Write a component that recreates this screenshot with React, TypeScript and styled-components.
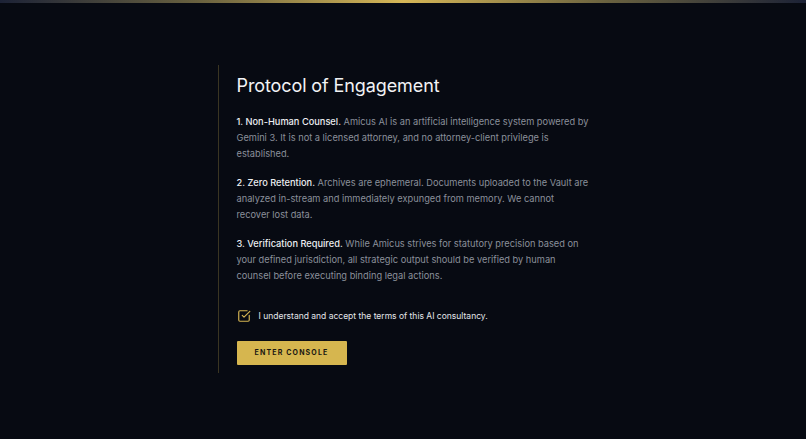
import React, { useState } from "react";
import styled, { createGlobalStyle } from "styled-components";
import { SquareCheckBig, Square } from "lucide-react";

const GlobalStyle = createGlobalStyle`
  html, body {
    margin: 0;
    padding: 0;
    background: #070a12;
    font-family: Inter, "Noto Sans", sans-serif;
    -webkit-font-smoothing: antialiased;
  }
`;

const Page = styled.div`
  min-height: 100vh;
  display: flex;
  flex-direction: column;
  background: #070a12;
`;

const TopBar = styled.div`
  height: 3px;
  background: linear-gradient(90deg, #1c2236 0%, #6b6340 25%, #d6b757 50%, #6b6340 75%, #1c2236 100%);
`;

const Main = styled.main`
  flex: 1;
  display: flex;
  align-items: center;
  justify-content: center;
  padding-bottom: 5px;
`;

const Panel = styled.section`
  width: 352px;
  border-left: 1px solid #3a3522;
  padding: 7px 0 8px 18px;
`;

const Title = styled.h1`
  margin: 0 0 14px;
  font-size: 18px;
  line-height: 28px;
  font-weight: 400;
  color: #f2f3f5;
  letter-spacing: -0.1px;
`;

const Clause = styled.p`
  margin: 0 0 13px;
  font-size: 9.25px;
  line-height: 16px;
  color: #8b909b;
  &:last-of-type {
    margin-bottom: 0;
  }
`;

const Lead = styled.strong`
  font-weight: 500;
  color: #eceef1;
`;

const AcceptRow = styled.label`
  margin-top: 24px;
  display: flex;
  align-items: center;
  gap: 8px;
  font-size: 8.5px;
  line-height: 16px;
  color: #e4e6ea;
  cursor: pointer;
  svg {
    color: #d4b452;
    flex-shrink: 0;
  }
`;

const EnterButton = styled.button<{ $enabled: boolean }>`
  margin-top: 17px;
  width: 110px;
  height: 24px;
  border: none;
  border-radius: 1px;
  background: #d6b64f;
  opacity: ${(p) => (p.$enabled ? 1 : 0.5)};
  color: #1a1712;
  font-family: Inter, "Noto Sans", sans-serif;
  font-size: 7px;
  font-weight: 700;
  letter-spacing: 1.15px;
  cursor: pointer;
`;

const clauses = [
  {
    lead: "1. Non-Human Counsel.",
    body: "Amicus AI is an artificial intelligence system powered by Gemini 3. It is not a licensed attorney, and no attorney-client privilege is established.",
  },
  {
    lead: "2. Zero Retention.",
    body: "Archives are ephemeral. Documents uploaded to the Vault are analyzed in-stream and immediately expunged from memory. We cannot recover lost data.",
  },
  {
    lead: "3. Verification Required.",
    body: "While Amicus strives for statutory precision based on your defined jurisdiction, all strategic output should be verified by human counsel before executing binding legal actions.",
  },
];

export default function App() {
  const [accepted, setAccepted] = useState(true);

  return (
    <Page>
      <GlobalStyle />
      <TopBar />
      <Main>
        <Panel>
          <Title>Protocol of Engagement</Title>
          {clauses.map((c) => (
            <Clause key={c.lead}>
              <Lead>{c.lead}</Lead> {c.body}
            </Clause>
          ))}
          <AcceptRow onClick={() => setAccepted(!accepted)}>
            {accepted ? <SquareCheckBig size={14} strokeWidth={2} /> : <Square size={14} strokeWidth={2} />}
            I understand and accept the terms of this AI consultancy.
          </AcceptRow>
          <EnterButton $enabled={accepted}>ENTER CONSOLE</EnterButton>
        </Panel>
      </Main>
    </Page>
  );
}
